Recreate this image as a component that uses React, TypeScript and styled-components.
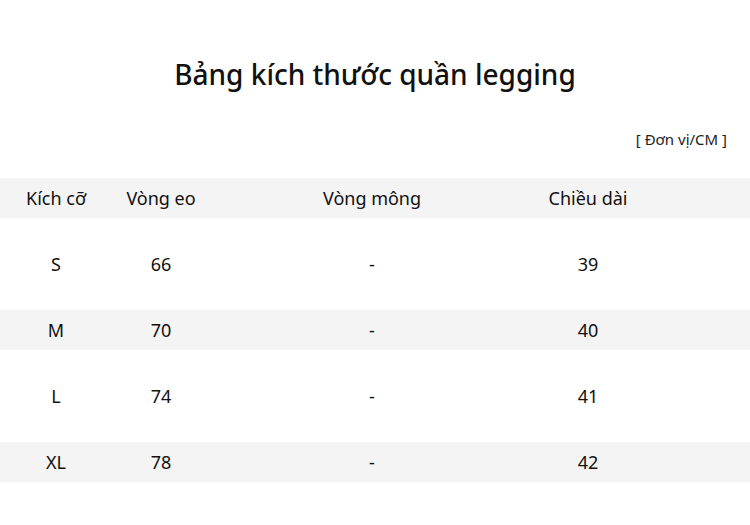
import styled, { createGlobalStyle } from 'styled-components';

interface ISizeRow {
    size: string
    waist: string
    hip: string
    length: string
}

const rows: ISizeRow[] = [
    { size: 'S', waist: '66', hip: '-', length: '39' },
    { size: 'M', waist: '70', hip: '-', length: '40' },
    { size: 'L', waist: '74', hip: '-', length: '41' },
    { size: 'XL', waist: '78', hip: '-', length: '42' },
];

const App = () => {
    return (
        <Page>
            <GlobalStyle />
            <Title>Bảng kích thước quần legging</Title>
            <Unit>[ Đơn vị/CM ]</Unit>
            <Table>
                <Row>
                    <Band shaded>
                        <Cell>Kích cỡ</Cell>
                        <Cell>Vòng eo</Cell>
                        <Cell>Vòng mông</Cell>
                        <Cell>Chiều dài</Cell>
                        <Cell />
                    </Band>
                </Row>
                {rows.map((r, i) => (
                    <Row key={r.size}>
                        <Band shaded={i % 2 === 1}>
                            <Cell>{r.size}</Cell>
                            <Cell>{r.waist}</Cell>
                            <Cell>{r.hip}</Cell>
                            <Cell>{r.length}</Cell>
                            <Cell />
                        </Band>
                    </Row>
                ))}
            </Table>
        </Page>
    )
}

const GlobalStyle = createGlobalStyle`
    html, body {
        margin: 0;
        padding: 0;
        background: #ffffff;
    }
    body {
        font-family: "Noto Sans", "Open Sans", sans-serif;
        color: #111111;
    }
`

const Page = styled.div`
    width: 750px;
    height: 525px;
    background: #ffffff;
    display: flex;
    flex-direction: column;
    overflow: hidden;
`

const Title = styled.h1`
    margin: 54px 0 0;
    font-size: 28px;
    font-weight: 500;
    line-height: 40px;
    text-align: center;
    color: #111;
`

const Unit = styled.div`
    margin-top: 34px;
    padding-right: 23px;
    text-align: right;
    font-size: 15px;
    line-height: 22px;
    color: #222;
`

const Table = styled.div`
    margin-top: 15px;
    display: flex;
    flex-direction: column;
`

const Row = styled.div`
    height: 66px;
    display: flex;
    align-items: center;
`

const Band = styled.div<{ shaded?: boolean }>`
    width: 100%;
    height: 40px;
    display: grid;
    grid-template-columns: 112px 98px 324px 108px 1fr;
    align-items: center;
    background: ${props => props.shaded ? '#f4f4f4' : 'transparent'};
`

const Cell = styled.div`
    text-align: center;
    font-size: 18px;
    color: #111;
`

export default App;
